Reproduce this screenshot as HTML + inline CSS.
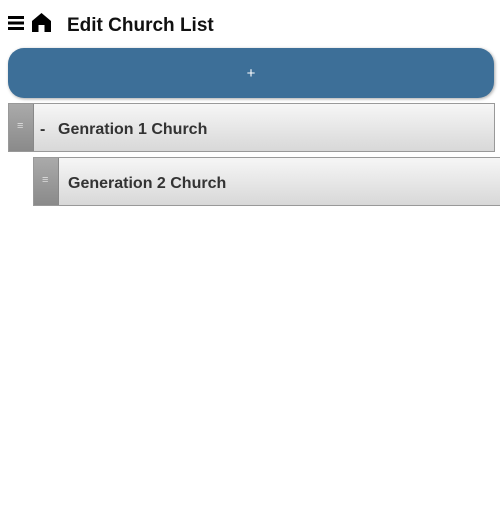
<!DOCTYPE html>
<html><head><meta charset="utf-8"><style>
html,body{margin:0;padding:0;width:500px;height:519px;background:#fff;overflow:hidden;font-family:"Liberation Sans",Arial,sans-serif}
.title{position:absolute;left:67px;top:15px;font-size:19px;font-weight:bold;color:#111}
.btn{position:absolute;left:8px;top:48px;width:486px;height:50px;background:#3d6f98;border-radius:16px;box-shadow:1px 1px 3px rgba(0,0,0,.35);color:#fff;text-align:center;line-height:52px;font-size:15px}
.item{position:absolute;height:47px;border:1px solid #999;background:linear-gradient(#f6f6f6,#d8d8d8);box-sizing:content-box}
.handle{position:absolute;left:0;top:0;width:24px;height:47px;background:linear-gradient(#aaa,#8a8a8a);border-right:1px solid #888}
.handle:after{content:"≡";position:absolute;left:8px;top:16px;color:#ddd;font-size:11px}
.lbl{position:absolute;top:17px;font-size:16px;font-weight:bold;color:#333}
</style></head><body>
<svg style="position:absolute;left:8px;top:15px" width="16" height="16" viewBox="0 0 16 16"><rect x="0" y="1" width="16" height="3" fill="#000"/><rect x="0" y="6.5" width="16" height="3" fill="#000"/><rect x="0" y="12" width="16" height="3" fill="#000"/></svg>
<svg style="position:absolute;left:32px;top:13px" width="19" height="19" viewBox="0 0 19 19"><path d="M9.5 0 L19 8 V19 H12.5 V12 H6.5 V19 H0 V8 Z" fill="#000"/></svg>
<div class="title">Edit Church List</div>
<div class="btn">+</div>
<div class="item" style="left:8px;top:103px;width:485px"><div class="handle"></div><div class="lbl" style="left:31px">-</div><div class="lbl" style="left:49px">Genration 1 Church</div></div>
<div class="item" style="left:33px;top:157px;width:470px"><div class="handle"></div><div class="lbl" style="left:34px">Generation 2 Church</div></div>
</body></html>
